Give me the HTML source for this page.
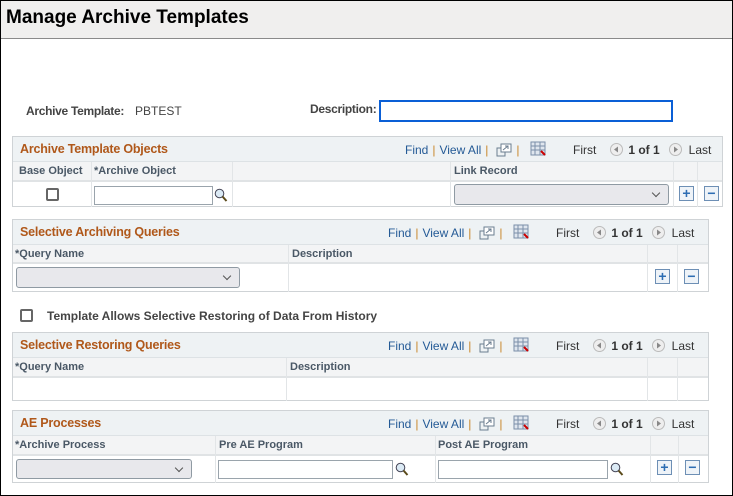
<!DOCTYPE html>
<html><head><meta charset="utf-8"><style>
*{box-sizing:border-box;margin:0;padding:0}
body{width:733px;height:496px;position:relative;background:#fff;font-family:"Liberation Sans",Arial,sans-serif;overflow:hidden}
.a{position:absolute}
#frame{left:0;top:0;width:733px;height:496px;border:1px solid #000}
#hdr{left:1px;top:1px;width:731px;height:38px;background:#f0efee;border-bottom:1px solid #8a8a8a}
#hdr h1{position:absolute;left:5px;top:6px;font-size:19px;font-weight:bold;color:#000}
.lbl{font-size:12px;font-weight:bold;color:#444;letter-spacing:-0.3px}
.grid{border:1px solid #cfd3d6;background:#fff}
.gh{position:absolute;left:0;top:0;right:0;height:25px;background:#eef2f4;border-bottom:1px solid #dde2e5}
.gt{position:absolute;left:7px;top:5px;font-size:12.5px;font-weight:bold;color:#b0581a;letter-spacing:-0.2px}
.ch{position:absolute;left:0;right:0;background:#f3f4f5;border-bottom:2px solid #e0e3e5}
.ct{position:absolute;top:3px;font-size:11px;font-weight:bold;color:#4a5866}
.vl{position:absolute;width:1px;background:#e2e5e7}
.nav{position:absolute;top:6px;height:16px;line-height:14px;font-size:12px;color:#333;white-space:nowrap}
.nav svg{vertical-align:top}
.nav .l{color:#245a96}
.nav .s{color:#c8862a;margin:0 4px}
.sel{position:absolute;border:1px solid #8f9aa3;border-radius:3px;background:#e8e8ec}
.sel:after{content:"";position:absolute;right:9px;top:5px;width:5px;height:5px;border-right:1px solid #555;border-bottom:1px solid #555;transform:rotate(45deg)}
.inp{position:absolute;border:1px solid #9aa4ac;background:#fff}
.btn{position:absolute;width:15px;height:15px;border:1px solid #6d8fb5;background:#eef3f8;color:#2d6db3;font-weight:bold;font-size:14px;line-height:12px;text-align:center}
.cb{position:absolute;width:13px;height:13px;border:2px solid #666;border-radius:2px;background:#fff}
</style></head><body>
<div id="frame" class="a"></div>
<div id="hdr" class="a"><h1>Manage Archive Templates</h1></div>

<div class="a lbl" style="left:26px;top:104px">Archive Template:</div>
<div class="a" style="left:135px;top:104px;font-size:12px;color:#444">PBTEST</div>
<div class="a lbl" style="left:310px;top:102px">Description:</div>
<div class="a" style="left:379px;top:100px;width:294px;height:22px;border:2px solid #0a5fd6;background:#fff"></div>

<!-- Grid 1 -->
<div class="a grid" style="left:12px;top:136px;width:711px;height:71px">
 <div class="gh"><div class="gt">Archive Template Objects</div>
  <div class="nav" style="left:392px"><span class="l">Find</span><span class="s">|</span><span class="l">View All</span><span class="s">|</span><svg width="16" height="14" style="margin-left:4px"><rect x="1" y="5" width="8" height="8" fill="none" stroke="#6b7d8f"/><rect x="5" y="1" width="10" height="8" fill="#fff" stroke="#6b7d8f"/><path d="M7 7 L12 3 M9 3h3v3" stroke="#6b7d8f" fill="none"/></svg><span class="s">|</span><svg width="17" height="16" style="margin-left:6px;margin-top:-2px"><rect x="1" y="1" width="14" height="13" fill="#dfe6ee" stroke="#7b8fa8"/><path d="M1 5h14M1 9h14M5 1v13M10 1v13" stroke="#7b8fa8"/><path d="M11 10l4 4" stroke="#c00" stroke-width="2"/></svg></div>
  <div class="nav" style="left:560px">First<svg width="13" height="13" style="margin:0 5px 0 14px"><circle cx="6.5" cy="6.5" r="6" fill="#eee" stroke="#bbb"/><path d="M8 3.5v6l-4-3z" fill="#888"/></svg><b style="color:#333">1 of 1</b><svg width="13" height="13" style="margin:0 7px 0 9px"><circle cx="6.5" cy="6.5" r="6" fill="#eee" stroke="#bbb"/><path d="M5 3.5v6l4-3z" fill="#888"/></svg>Last</div>
 </div>
 <div class="ch" style="top:25px;height:20px">
  <div class="ct" style="left:6px">Base Object</div>
  <div class="ct" style="left:81px">*Archive Object</div>
  <div class="ct" style="left:441px">Link Record</div>
 </div>
 <div class="vl" style="left:78px;top:25px;height:45px"></div>
 <div class="vl" style="left:219px;top:25px;height:45px"></div>
 <div class="vl" style="left:437px;top:25px;height:45px"></div>
 <div class="vl" style="left:660px;top:25px;height:45px"></div>
 <div class="vl" style="left:684px;top:25px;height:45px"></div>
 <div class="cb" style="left:33px;top:51px"></div>
 <div class="inp" style="left:81px;top:49px;width:119px;height:19px"></div>
 <svg class="a" style="left:201px;top:51px" width="14" height="15"><circle cx="5.5" cy="5.5" r="4.3" fill="#dbeaf5" stroke="#445"/><path d="M8.5 8.5l4 4.5" stroke="#5a4a1a" stroke-width="2"/></svg>
 <div class="sel" style="left:441px;top:47px;width:215px;height:21px"></div>
 <div class="btn" style="left:666px;top:49px">+</div>
 <div class="btn" style="left:691px;top:49px">−</div>
</div>

<!-- Grid 2 -->
<div class="a grid" style="left:12px;top:219px;width:697px;height:73px">
 <div class="gh"><div class="gt">Selective Archiving Queries</div>
  <div class="nav" style="left:375px"><span class="l">Find</span><span class="s">|</span><span class="l">View All</span><span class="s">|</span><svg width="16" height="14" style="margin-left:4px"><rect x="1" y="5" width="8" height="8" fill="none" stroke="#6b7d8f"/><rect x="5" y="1" width="10" height="8" fill="#fff" stroke="#6b7d8f"/><path d="M7 7 L12 3 M9 3h3v3" stroke="#6b7d8f" fill="none"/></svg><span class="s">|</span><svg width="17" height="16" style="margin-left:6px;margin-top:-2px"><rect x="1" y="1" width="14" height="13" fill="#dfe6ee" stroke="#7b8fa8"/><path d="M1 5h14M1 9h14M5 1v13M10 1v13" stroke="#7b8fa8"/><path d="M11 10l4 4" stroke="#c00" stroke-width="2"/></svg></div>
  <div class="nav" style="left:543px">First<svg width="13" height="13" style="margin:0 5px 0 14px"><circle cx="6.5" cy="6.5" r="6" fill="#eee" stroke="#bbb"/><path d="M8 3.5v6l-4-3z" fill="#888"/></svg><b style="color:#333">1 of 1</b><svg width="13" height="13" style="margin:0 7px 0 9px"><circle cx="6.5" cy="6.5" r="6" fill="#eee" stroke="#bbb"/><path d="M5 3.5v6l4-3z" fill="#888"/></svg>Last</div>
 </div>
 <div class="ch" style="top:25px;height:19px">
  <div class="ct" style="left:2px">*Query Name</div>
  <div class="ct" style="left:279px">Description</div>
 </div>
 <div class="vl" style="left:275px;top:25px;height:47px"></div>
 <div class="vl" style="left:634px;top:25px;height:47px"></div>
 <div class="vl" style="left:664px;top:25px;height:47px"></div>
 <div class="sel" style="left:3px;top:47px;width:224px;height:21px"></div>
 <div class="btn" style="left:642px;top:49px">+</div>
 <div class="btn" style="left:671px;top:49px">−</div>
</div>

<div class="cb" style="left:20px;top:309px"></div>
<div class="a lbl" style="left:47px;top:309px;letter-spacing:0">Template Allows Selective Restoring of Data From History</div>

<!-- Grid 3 -->
<div class="a grid" style="left:12px;top:332px;width:697px;height:69px">
 <div class="gh"><div class="gt">Selective Restoring Queries</div>
  <div class="nav" style="left:375px"><span class="l">Find</span><span class="s">|</span><span class="l">View All</span><span class="s">|</span><svg width="16" height="14" style="margin-left:4px"><rect x="1" y="5" width="8" height="8" fill="none" stroke="#6b7d8f"/><rect x="5" y="1" width="10" height="8" fill="#fff" stroke="#6b7d8f"/><path d="M7 7 L12 3 M9 3h3v3" stroke="#6b7d8f" fill="none"/></svg><span class="s">|</span><svg width="17" height="16" style="margin-left:6px;margin-top:-2px"><rect x="1" y="1" width="14" height="13" fill="#dfe6ee" stroke="#7b8fa8"/><path d="M1 5h14M1 9h14M5 1v13M10 1v13" stroke="#7b8fa8"/><path d="M11 10l4 4" stroke="#c00" stroke-width="2"/></svg></div>
  <div class="nav" style="left:543px">First<svg width="13" height="13" style="margin:0 5px 0 14px"><circle cx="6.5" cy="6.5" r="6" fill="#eee" stroke="#bbb"/><path d="M8 3.5v6l-4-3z" fill="#888"/></svg><b style="color:#333">1 of 1</b><svg width="13" height="13" style="margin:0 7px 0 9px"><circle cx="6.5" cy="6.5" r="6" fill="#eee" stroke="#bbb"/><path d="M5 3.5v6l4-3z" fill="#888"/></svg>Last</div>
 </div>
 <div class="ch" style="top:25px;height:20px">
  <div class="ct" style="left:2px">*Query Name</div>
  <div class="ct" style="left:277px">Description</div>
 </div>
 <div class="vl" style="left:273px;top:25px;height:43px"></div>
 <div class="vl" style="left:634px;top:25px;height:43px"></div>
 <div class="vl" style="left:664px;top:25px;height:43px"></div>
</div>

<!-- Grid 4 -->
<div class="a grid" style="left:12px;top:410px;width:697px;height:73px">
 <div class="gh"><div class="gt">AE Processes</div>
  <div class="nav" style="left:375px"><span class="l">Find</span><span class="s">|</span><span class="l">View All</span><span class="s">|</span><svg width="16" height="14" style="margin-left:4px"><rect x="1" y="5" width="8" height="8" fill="none" stroke="#6b7d8f"/><rect x="5" y="1" width="10" height="8" fill="#fff" stroke="#6b7d8f"/><path d="M7 7 L12 3 M9 3h3v3" stroke="#6b7d8f" fill="none"/></svg><span class="s">|</span><svg width="17" height="16" style="margin-left:6px;margin-top:-2px"><rect x="1" y="1" width="14" height="13" fill="#dfe6ee" stroke="#7b8fa8"/><path d="M1 5h14M1 9h14M5 1v13M10 1v13" stroke="#7b8fa8"/><path d="M11 10l4 4" stroke="#c00" stroke-width="2"/></svg></div>
  <div class="nav" style="left:543px">First<svg width="13" height="13" style="margin:0 5px 0 14px"><circle cx="6.5" cy="6.5" r="6" fill="#eee" stroke="#bbb"/><path d="M8 3.5v6l-4-3z" fill="#888"/></svg><b style="color:#333">1 of 1</b><svg width="13" height="13" style="margin:0 7px 0 9px"><circle cx="6.5" cy="6.5" r="6" fill="#eee" stroke="#bbb"/><path d="M5 3.5v6l4-3z" fill="#888"/></svg>Last</div>
 </div>
 <div class="ch" style="top:25px;height:20px">
  <div class="ct" style="left:2px">*Archive Process</div>
  <div class="ct" style="left:206px">Pre AE Program</div>
  <div class="ct" style="left:425px">Post AE Program</div>
 </div>
 <div class="vl" style="left:202px;top:25px;height:47px"></div>
 <div class="vl" style="left:422px;top:25px;height:47px"></div>
 <div class="vl" style="left:637px;top:25px;height:47px"></div>
 <div class="vl" style="left:665px;top:25px;height:47px"></div>
 <div class="sel" style="left:3px;top:48px;width:176px;height:20px"></div>
 <div class="inp" style="left:205px;top:49px;width:175px;height:19px"></div>
 <svg class="a" style="left:382px;top:51px" width="14" height="15"><circle cx="5.5" cy="5.5" r="4.3" fill="#dbeaf5" stroke="#445"/><path d="M8.5 8.5l4 4.5" stroke="#5a4a1a" stroke-width="2"/></svg>
 <div class="inp" style="left:425px;top:49px;width:170px;height:19px"></div>
 <svg class="a" style="left:597px;top:51px" width="14" height="15"><circle cx="5.5" cy="5.5" r="4.3" fill="#dbeaf5" stroke="#445"/><path d="M8.5 8.5l4 4.5" stroke="#5a4a1a" stroke-width="2"/></svg>
 <div class="btn" style="left:644px;top:49px">+</div>
 <div class="btn" style="left:672px;top:49px">−</div>
</div>
</body></html>
